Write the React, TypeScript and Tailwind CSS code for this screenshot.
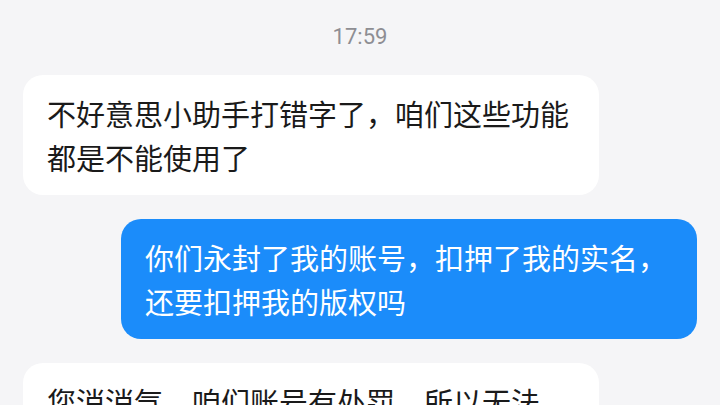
import React from "react";

const cjk = { fontFamily: '"Noto Sans CJK SC", "Noto Sans", sans-serif' };

export default function App() {
  return (
    <div className="w-[720px] h-[405px] overflow-hidden bg-[#f5f5f7] flex flex-col">
      <div
        className="shrink-0 pt-[23px] h-[75px] text-center text-[22px] leading-[28px] text-[#8e8e93]"
        style={{ fontFamily: 'Roboto, "Liberation Sans", sans-serif' }}
      >
        17:59
      </div>
      <div className="shrink-0 flex flex-col gap-[24px] px-[23px]" style={cjk}>
        <div className="shrink-0 self-start max-w-[576px] bg-white rounded-[20px] px-[24px] py-[16px] text-[29px] leading-[44px] text-[#1a1a1a]">
          不好意思小助手打错字了，咱们这些功能都是不能使用了
        </div>
        <div className="shrink-0 self-end max-w-[576px] bg-[#1b8cfa] rounded-[20px] px-[24px] py-[16px] text-[29px] leading-[44px] text-white">
          你们永封了我的账号，扣押了我的实名，还要扣押我的版权吗
        </div>
        <div className="shrink-0 self-start w-[576px] bg-white rounded-[20px] px-[24px] py-[16px] text-[29px] leading-[44px] text-[#1a1a1a]">
          您消消气，咱们账号有处罚，所以无法
          <br />
          为您处理哦
        </div>
      </div>
    </div>
  );
}
